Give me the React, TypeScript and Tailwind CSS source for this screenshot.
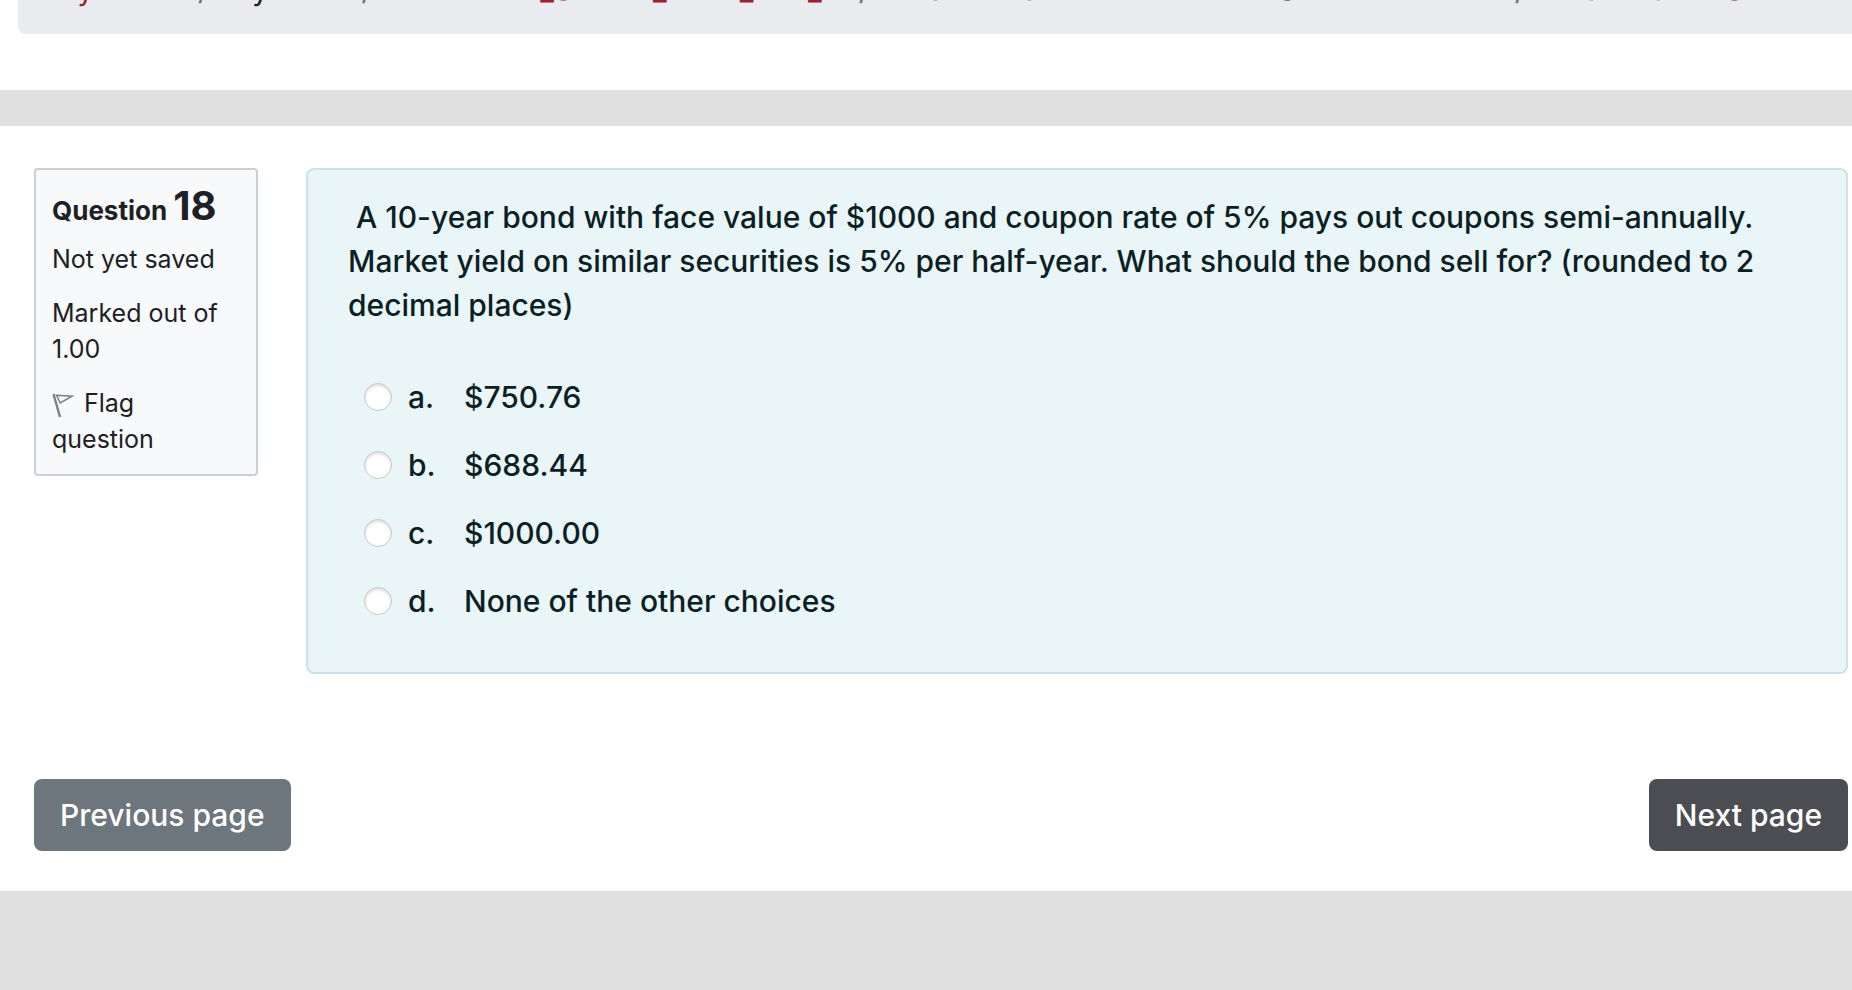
import { useState } from "react";

const crumbs = [
  { label: "My home", link: true },
  { label: "My units", link: false },
  { label: "MGMT808_SHFYR_2020_ALL_U", link: true },
  { label: "Final Release Assessments Session 2 2020", link: false },
  { label: "Final Exam - S2 2020", link: true },
];

const answers = [
  { id: "a", text: "$750.76" },
  { id: "b", text: "$688.44" },
  { id: "c", text: "$1000.00" },
  { id: "d", text: "None of the other choices" },
];

function FlagIcon() {
  return (
    <svg
      viewBox="0 0 22 26"
      className="inline-block w-[22px] h-[26px] mr-[10px] align-[-6px]"
      fill="none"
      stroke="#7d7f80"
      aria-hidden="true"
    >
      <path d="M1.5 2 L8 25" strokeWidth="2.4" />
      <path d="M4.5 3.2 L20 4.2 L8.2 11 Z" strokeWidth="1.5" />
    </svg>
  );
}

function Breadcrumb() {
  return (
    <nav
      aria-label="Breadcrumb"
      className="ml-[18px] h-[34px] flex items-end overflow-hidden rounded-bl-lg bg-[#e9ebef] pb-[23px]"
    >
      <ol className="flex pl-8 whitespace-nowrap leading-[44px]">
        {crumbs.map((crumb, i) => (
          <li key={crumb.label} className="flex">
            {i > 0 && <span className="px-4 text-[#6a737b]">/</span>}
            {crumb.link ? (
              <a href="#" className="text-[#9b2233]">
                {crumb.label}
              </a>
            ) : (
              <span>{crumb.label}</span>
            )}
          </li>
        ))}
      </ol>
    </nav>
  );
}

function QuestionInfo() {
  return (
    <aside className="w-56 shrink-0 self-start rounded border-2 border-[#cad0d7] bg-[#f8f9fb] px-4 pt-4 pb-[17px] text-[25px] leading-9">
      <h3 className="mb-[10px] text-[26px] font-bold leading-10">
        Question <span className="text-[40px]">18</span>
      </h3>
      <div className="mb-[18px]">Not yet saved</div>
      <div className="mb-[18px]">Marked out of 1.00</div>
      <a href="#" className="block">
        <FlagIcon />
        Flag question
      </a>
    </aside>
  );
}

function App() {
  const [answer, setAnswer] = useState("");

  return (
    <div className="min-h-screen overflow-x-hidden bg-[#e0e0e0] font-['Inter',sans-serif] text-[30px] text-[#1d2125]">
      <header className="bg-white pb-14">
        <Breadcrumb />
      </header>
      <main className="mt-9 bg-white pt-[42px] pr-1 pb-10 pl-[34px]">
        <div className="flex gap-12">
          <QuestionInfo />
          <section className="flex-1 rounded-lg border-2 border-[#c6e4ea] bg-[#eaf5f8] px-10 pt-[25px] pb-[37px] font-medium text-[#0b1f24]">
            <p className="leading-[44px] whitespace-pre-wrap">
              {
                "\u00a0A 10-year bond with face value of $1000 and coupon rate of 5% pays out coupons semi-annually. Market yield on similar securities is 5% per half-year. What should the bond sell for? (rounded to 2 decimal places)"
              }
            </p>
            <fieldset className="mt-9 ml-4 leading-[44px]">
              {answers.map((a) => (
                <label key={a.id} className="flex items-center py-3">
                  <input
                    type="radio"
                    name="answer"
                    value={a.id}
                    checked={answer === a.id}
                    onChange={() => setAnswer(a.id)}
                    className="size-7 shrink-0 appearance-none rounded-full border border-[#c3c8ca] bg-white shadow-[inset_0_2px_3px_#00000022] checked:border-8 checked:border-[#0f6cbf]"
                  />
                  <span className="ml-4 w-14">{a.id}.</span>
                  <span>{a.text}</span>
                </label>
              ))}
            </fieldset>
          </section>
        </div>
        <div className="mt-[105px] flex justify-between font-medium text-white">
          <button type="button" className="rounded-lg bg-[#6d757d] px-[26px] py-[14px] leading-[44px]">
            Previous page
          </button>
          <button type="button" className="rounded-lg bg-[#4c4d53] px-[26px] py-[14px] leading-[44px]">
            Next page
          </button>
        </div>
      </main>
    </div>
  );
}

export default App;
